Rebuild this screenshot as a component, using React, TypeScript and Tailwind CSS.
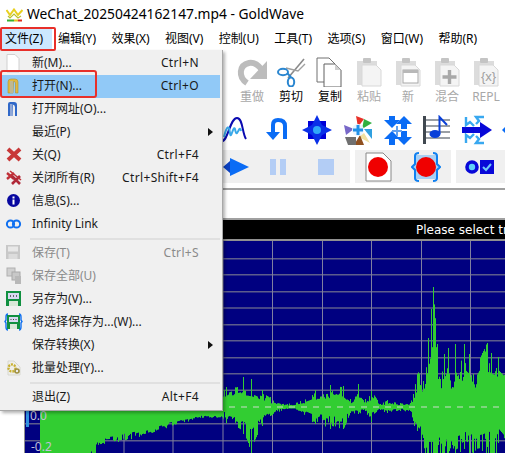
import React from "react";

const FONT = "font-['Noto_Sans','Noto_Sans_CJK_SC',sans-serif]";

const Ico = ({ s = 30, children }: { s?: number; children: React.ReactNode }) => (
  <svg width={s} height={s} viewBox={`0 0 ${s} ${s}`} className="shrink-0">{children}</svg>
);

/* ---------- title / menu glyphs ---------- */
const AppIcon = () => (
  <svg width="17" height="14" viewBox="0 0 17 14" className="shrink-0">
    <path d="M0.5 2 L4 7 L8 1.5 L12 7 L16.5 2" fill="none" stroke="#e8d020" strokeWidth="2" />
    <path d="M2 8 L4 10 L8 6 L12 10 L15 8" fill="none" stroke="#b8c030" strokeWidth="1.2" />
    <rect x="1" y="11.5" width="7" height="2" fill="#38b030" />
    <rect x="8" y="11.5" width="4" height="2" fill="#e8c020" />
    <rect x="12" y="11.5" width="4" height="2" fill="#e03020" />
  </svg>
);

const Floppy = ({ c, inner, top }: { c: string; inner: string; top: string }) => (
  <>
    <rect x="4" y="2" width="14" height="14" fill={c} />
    <rect x="6" y="3.5" width="10" height="5" fill={top} />
    <rect x="6.5" y="11" width="9" height="5" fill={inner} />
  </>
);

const menuIcons: Record<string, React.ReactNode> = {
  new: (<path d="M5 1.5 H13 L17 5.5 V19 H5 Z" fill="#fff" stroke="#d0d0d0" />),
  open: (
    <>
      <path d="M6 17 V6 Q6 3 9 3 H13 Q16 3 16 6 V17 H13.5 V7 Q13 5 11.5 5.5 L11 17 Z" fill="#e0b840" stroke="#b09030" strokeWidth=".6" />
      <rect x="8" y="5" width="3" height="12" fill="#c0b890" />
    </>
  ),
  url: (
    <>
      <path d="M6 17 V5 Q6 3 8 3 H12 Q15 3 15 6 V17 H13 V8 Q12 5 11 6 L10.5 17 Z" fill="#3068c8" />
      <rect x="8" y="5" width="2.5" height="12" fill="#90a8d8" />
    </>
  ),
  close: (<path d="M6 4 L18 15 M18 4 L6 15" stroke="#c83838" strokeWidth="4" />),
  closeAll: (
    <>
      <path d="M5 5 L12 11 M12 5 L5 11" stroke="#c03038" strokeWidth="2.4" />
      <path d="M10 8 L18 16 M18 8 L10 16" stroke="#b02838" strokeWidth="2.6" />
      <path d="M8 3 L19 12" stroke="#c03038" strokeWidth="1.6" />
    </>
  ),
  info: (
    <>
      <circle cx="11.5" cy="9.5" r="6.5" fill="#0808a0" />
      <rect x="10.5" y="8.5" width="2" height="5" fill="#fff" />
      <rect x="10.5" y="5.5" width="2" height="2" fill="#fff" />
    </>
  ),
  link: (
    <>
      <circle cx="8.5" cy="10" r="3.6" fill="none" stroke="#1070f0" strokeWidth="2" />
      <circle cx="14.5" cy="10" r="3.6" fill="none" stroke="#1070f0" strokeWidth="2" />
    </>
  ),
  save: <Floppy c="#c8c8c8" top="#e8e8e8" inner="#dcdcdc" />,
  saveAll: (
    <>
      <rect x="5" y="2" width="8" height="8" fill="#d0d0d0" stroke="#b0b0b0" />
      <rect x="10" y="6" width="8" height="8" fill="#c8c8c8" stroke="#a8a8a8" />
      <rect x="13" y="10" width="6" height="8" fill="#b8b8b8" />
    </>
  ),
  saveAs: (
    <>
      <rect x="4" y="2" width="15" height="15" fill="#109040" />
      <rect x="6" y="4" width="11" height="6" fill="#d8d8f0" />
      <path d="M8 7 h1 M11 7 h1 M14 7 h1" stroke="#404040" strokeWidth="1.4" />
      <rect x="7" y="12" width="9" height="5" fill="#d8e8d8" />
    </>
  ),
  saveSel: (
    <>
      <rect x="5" y="3" width="13" height="14" fill="#109040" />
      <rect x="7" y="5" width="9" height="5" fill="#d8d8f0" />
      <path d="M8.5 7.5 h1 M11 7.5 h1 M13.5 7.5 h1" stroke="#404040" strokeWidth="1.2" />
      <rect x="8" y="12" width="7" height="5" fill="#d8e8d8" />
      <path d="M6 2 Q4 2 4 5 V8 L3 9.5 L4 11 V15 Q4 18 6 18 M17 2 Q19 2 19 5 V8 L20 9.5 L19 11 V15 Q19 18 17 18" fill="none" stroke="#1070f0" strokeWidth="1.4" />
    </>
  ),
  batch: (
    <>
      <path d="M6 3 H12 L18 9 V17 H6 Z" fill="#eeeeea" stroke="#d8d8d0" />
      <circle cx="10" cy="10" r="3.5" fill="none" stroke="#c8b030" strokeWidth="2.4" strokeDasharray="2 1" />
      <circle cx="15" cy="13" r="2" fill="none" stroke="#a09040" strokeWidth="1.6" />
    </>
  ),
};

type Row = { t: string; k?: string; ic?: string; dis?: boolean; sub?: boolean; hi?: boolean } | "sep";
const rows: Row[] = [
  { t: "新(M)...", k: "Ctrl+N", ic: "new" },
  { t: "打开(N)...", k: "Ctrl+O", ic: "open", hi: true },
  { t: "打开网址(O)...", ic: "url" },
  { t: "最近(P)", sub: true },
  { t: "关(Q)", k: "Ctrl+F4", ic: "close" },
  { t: "关闭所有(R)", k: "Ctrl+Shift+F4", ic: "closeAll" },
  { t: "信息(S)...", ic: "info" },
  { t: "Infinity Link", ic: "link" },
  "sep",
  { t: "保存(T)", k: "Ctrl+S", ic: "save", dis: true },
  { t: "保存全部(U)", ic: "saveAll", dis: true },
  { t: "另存为(V)...", ic: "saveAs" },
  { t: "将选择保存为...(W)...", ic: "saveSel" },
  { t: "保存转换(X)", sub: true },
  { t: "批量处理(Y)...", ic: "batch" },
  "sep",
  { t: "退出(Z)", k: "Alt+F4" },
];

const topMenus = ["编辑(Y)", "效果(X)", "视图(V)", "控制(U)", "工具(T)", "选项(S)", "窗口(W)", "帮助(R)"];

/* ---------- toolbar icons ---------- */
const Clip = ({ children }: { children?: React.ReactNode }) => (
  <Ico>
    <rect x="3" y="4" width="20" height="24" fill="#dcdcdc" />
    <rect x="9" y="1" width="8" height="5" rx="1" fill="#c4c4c4" />
    <path d="M8 8 H22 L27 13 V29 H8 Z" fill="#f4f4f4" stroke="#d8d8d8" />
    {children}
  </Ico>
);

const toolbar: { n: string; on?: boolean; i: React.ReactNode }[] = [
  {
    n: "重做",
    i: (
      <Ico>
        <path d="M10 26 C1 20 2 8 12 6 C18 5 22 9 25 13" fill="none" stroke="#bcbcbc" strokeWidth="6" />
        <path d="M30 4 V22 H13 Z" fill="#bcbcbc" />
      </Ico>
    ),
  },
  {
    n: "剪切",
    on: true,
    i: (
      <Ico>
        <path d="M12 21 L28 2" stroke="#8a8a8a" strokeWidth="1.6" />
        <path d="M10 11 L22 14 L29 7" fill="none" stroke="#a0a0a0" strokeWidth="1.4" />
        <ellipse cx="7" cy="15" rx="5" ry="3.2" fill="none" stroke="#2a86d0" strokeWidth="2" />
        <ellipse cx="15" cy="25" rx="3.2" ry="4.6" fill="none" stroke="#2a86d0" strokeWidth="2" />
        <path d="M11 16 L15 20" stroke="#2a86d0" strokeWidth="2" />
      </Ico>
    ),
  },
  {
    n: "复制",
    on: true,
    i: (
      <Ico>
        <path d="M2 1 H14 L20 7 V25 H2 Z" fill="#fff" stroke="#707070" />
        <path d="M9 7 H20 L26 13 V30 H9 Z" fill="#fff" stroke="#606060" />
        <path d="M20 7 L20 13 H26" fill="#d0d0d0" />
      </Ico>
    ),
  },
  { n: "粘贴", i: <Clip /> },
  {
    n: "新",
    i: (
      <Clip>
        <rect x="10" y="13" width="15" height="13" fill="#fff" stroke="#a8a8a8" />
        <rect x="10" y="13" width="15" height="3" fill="#b8b8b8" />
      </Clip>
    ),
  },
  {
    n: "混合",
    i: (
      <Clip>
        <path d="M17.5 13 V27 M10.5 20 H24.5" stroke="#a8a8a8" strokeWidth="3.4" />
      </Clip>
    ),
  },
  {
    n: "REPL",
    i: (
      <Clip>
        <text x="17.5" y="24" textAnchor="middle" fontSize="13" fill="#a0a0a0" fontFamily="Liberation Sans">{"{x}"}</text>
      </Clip>
    ),
  },
];

const B1 = "#0a6cf5";
const row2: React.ReactNode[] = [
  <Ico key="a">
    <path d="M0 26 C6 26 8 3 15 3 C21 3 20 18 24 24" fill="none" stroke="#0a0ab0" strokeWidth="2" />
    <path d="M2 22 C5 10 7 10 8 18 C9 26 11 10 13 14 C15 26 17 8 19 16" fill="none" stroke="#38a8e8" strokeWidth="2" />
  </Ico>,
  <Ico key="b">
    <path d="M11 20 V10 Q11 5 16 5 Q23 5 23 11 V24" fill="none" stroke={B1} strokeWidth="4" />
    <path d="M4 17 H18 L11 25 Z" fill={B1} />
  </Ico>,
  <Ico key="c">
    <rect x="6" y="6" width="18" height="18" fill="#0000d8" />
    <path d="M15 0 L20 10 L30 15 L20 20 L15 30 L10 20 L0 15 L10 10 Z" fill="#0a30e8" />
    <circle cx="15" cy="15" r="4" fill="#30a8f8" />
  </Ico>,
  <Ico key="d">
    <path d="M14 1 L22 4 L16 12 Z" fill="#e83028" />
    <path d="M22 4 L30 8 L20 14 Z" fill="#30b040" />
    <path d="M22 14 L32 14 L30 24 Z" fill="#30a0e0" />
    <path d="M22 18 L28 28 L17 22 Z" fill="#f0e0a0" />
    <path d="M12 30 L18 20 L22 30 Z" fill="#905020" />
    <path d="M3 22 H14 V30 H6 Z" fill="#707070" />
    <path d="M2 10 L12 14 L4 20 Z" fill="#7868c8" />
    <circle cx="16" cy="15" r="6" fill="#e8f4ff" />
    <path d="M16 10 V20 M11 15 H21" stroke="#2090e8" strokeWidth="3" />
  </Ico>,
  <Ico key="e">
    <path d="M7 1 V5 H2 L10 13 L18 5 H13 V1 Z" fill={B1} />
    <path d="M25 1 L17 9 H22 V14 H28 V9 H33 Z" fill={B1} transform="translate(-3 0)" />
    <path d="M10 16 L2 24 H7 V30 H13 V24 H18 Z" fill={B1} />
    <path d="M22 16 V22 H17 L25 30 L33 22 H28 V16 Z" fill={B1} transform="translate(-3 0)" />
    <path d="M15 11 V21 M10 16 H20" stroke="#60a0f0" strokeWidth="2" />
  </Ico>,
  <Ico key="f">
    <path d="M3 5 H28 M3 11 H28 M3 17 H28 M3 23 H28" stroke="#7a8088" strokeWidth="1.6" fill="none" />
    <rect x="1" y="1" width="3" height="28" fill="#404850" />
    <ellipse cx="13" cy="19" rx="5.5" ry="4" fill="#0a40d8" />
    <path d="M17.5 19 V2 L25 10" fill="none" stroke="#0a40d8" strokeWidth="2" />
  </Ico>,
  <Ico key="g">
    <path d="M0 12 H18 V7 L30 15 L18 23 V18 H0 Z" fill="#0808d8" />
    <path d="M4 2 L4 10 L8 7 L12 11 M22 2 H14 L17 6 L14 9 M4 28 V20 L8 23 L12 19 M22 28 H14 L17 24 L14 21" fill="none" stroke="#38a8f0" strokeWidth="2.4" />
  </Ico>,
  <Ico key="h">
    <path d="M0 15 L10 5 V25 Z" fill={B1} />
    <rect x="10" y="11" width="18" height="8" fill={B1} />
  </Ico>,
];

/* ---------- waveform ---------- */
const ctrl: [number, number, number][] = [
  [26, 0, 0], [40, 40, 120], [84, 40, 70], [100, 30, 36], [130, 30, 32], [170, 24, 19], [200, 18, 11], [222, 14, 10],
  [226, 20, 16], [243, 30, 27], [251, 28, 46], [262, 17, 19], [270, 10, 9], [287, 3, 2], [300, 6, 4],
  [315, 17, 17], [330, 22, 22], [343, 21, 22], [350, 8, 6], [358, 23, 7], [365, 8, 4], [371, 16, 15],
  [380, 3, 3], [387, 7, 6], [400, 4, 4], [410, 4, 4], [413, 13, 14], [417, 33, 24], [423, 26, 31],
  [428, 69, 60], [431, 98, 60], [433, 120, 60], [437, 63, 60], [440, 28, 46], [444, 53, 50], [448, 59, 50],
  [452, 20, 38], [455, 63, 48], [460, 35, 45], [464, 63, 42], [469, 53, 48], [473, 33, 46], [482, 54, 44],
  [487, 64, 40], [491, 54, 48], [498, 50, 36], [505, 40, 50],
];

const peaks = new Set(ctrl.filter((c) => c[0] >= 222).map((c) => c[0]));

function envelope(x: number): [number, number] {
  for (let i = 1; i < ctrl.length; i++) {
    if (x <= ctrl[i][0]) {
      const [a, u0, d0] = ctrl[i - 1];
      const [b, u1, d1] = ctrl[i];
      const t = (x - a) / (b - a);
      return [u0 + (u1 - u0) * t, d0 + (d1 - d0) * t];
    }
  }
  return [40, 50];
}

function wavePath(): string {
  let seed = 987;
  const rnd = () => {
    seed = (seed * 1664525 + 1013904223) >>> 0;
    return seed / 4294967296;
  };
  let d = "";
  let upN = 0.5;
  let dnN = 0.5;
  for (let x = 40; x < 505; x += 1) {
    const [u, v] = envelope(x);
    if (rnd() > 0.3) {
      const loud = x >= 412;
      upN = (loud ? 0.5 : 0.38) + 0.3 * rnd() + (rnd() > 0.8 ? 0.35 : 0);
      dnN = x < 222 ? 0.8 + 0.25 * rnd() : (loud ? 0.55 : 0.38) + 0.35 * rnd() + (rnd() > 0.7 ? 0.35 : 0);
    }
    const isPeak = peaks.has(x);
    const up = Math.max(1.5, u * (isPeak ? 1 : upN));
    const dn = x < 86 ? 60 : Math.max(1.5, v * (isPeak ? 1 : dnN));
    d += `M${x + 0.5} ${(406 - up).toFixed(1)}V${(406 + dn).toFixed(1)}`;
  }
  return d;
}

const hLines = [257.7, 273.7, 290.7, 307, 323.7, 339.7, 356.7, 372.7, 389.3, 422.7, 439.7];
const vLines = [75, 124, 173, 223, 272.5, 322.5, 371.5, 421.5, 470.5];

const Waveform = () => (
  <svg width="480" height="213" viewBox="25 240 480 213" className="block">
    <rect x="25" y="240" width="480" height="213" fill="#000080" />
    {hLines.map((y) => (
      <line key={y} x1="25" x2="505" y1={y} y2={y} stroke="#5c5c8c" strokeWidth="1.4" />
    ))}
    {vLines.map((x) => (
      <line key={x} x1={x} x2={x} y1="240" y2="453" stroke="#8080a0" strokeWidth="1" />
    ))}
    <path d={wavePath()} stroke="#32cd32" strokeWidth="1" fill="none" />
    <line x1="25" x2="505" y1="406" y2="406" stroke="#98d898" strokeWidth="1.4" strokeDasharray="6 6" />
    <rect x="26" y="410" width="3" height="16" fill="#3090e0" />
  </svg>
);

export default function App() {
  return (
    <div className={`relative h-[453px] w-[505px] overflow-hidden bg-white text-[12px] text-black ${FONT}`}>
      {/* title */}
      <div className="flex h-[27px] items-center pl-[6px] pt-[2px]">
        <AppIcon />
        <span className="ml-[4px] text-[13.8px] whitespace-nowrap">WeChat_20250424162147.mp4 - GoldWave</span>
      </div>

      {/* menu bar */}
      <div className="flex h-[23px] items-center">
        <div className="ml-[2px] flex h-[21px] w-[50px] items-center bg-[#cce8ff] pl-[3px]">文件(Z)</div>
        <div className="ml-[6px] flex gap-[15.4px] whitespace-nowrap">
          {topMenus.map((m) => (
            <span key={m}>{m}</span>
          ))}
        </div>
      </div>

      {/* toolbar row 1 */}
      <div className="flex h-[55px] overflow-hidden pl-[232.5px] pt-[7px]">
        {toolbar.map((b) => (
          <div key={b.n} className="flex w-[39px] shrink-0 flex-col items-center">
            {b.i}
            <span className={`mt-[2px] leading-[16px] ${b.on ? "text-black" : "text-[#a8a8a8]"}`}>{b.n}</span>
          </div>
        ))}
      </div>

      {/* toolbar row 2 */}
      <div className="flex h-[45px] overflow-hidden pl-[217px] pt-[10px]">
        {row2.map((ic, i) => (
          <div key={i} className="flex w-[40px] shrink-0 justify-center">
            {ic}
          </div>
        ))}
      </div>

      {/* toolbar row 3 */}
      <div className="flex h-[33px] gap-[5px] overflow-hidden">
        <div className="flex w-[350px] items-center bg-[#f0f0f0] pl-[223px]">
          <svg width="26" height="18" viewBox="0 0 26 18" className="shrink-0">
            <path d="M7 0 L26 9 L7 18 Z" fill={B1} />
            <path d="M0 9 L7 3 V15 Z" fill="#0a40c0" />
          </svg>
          <div className="ml-[21px] flex h-[16px] w-[16px] justify-between">
            <div className="h-full w-[6px] bg-[#b3cdf5]" />
            <div className="h-full w-[6px] bg-[#b3cdf5]" />
          </div>
          <div className="ml-[32px] h-[16px] w-[16px] bg-[#b3cdf5]" />
        </div>
        <div className="flex w-[96px] items-center justify-around bg-[#f0f0f0]">
          <svg width="27" height="30" viewBox="0 0 27 30">
            <path d="M1 1 H18 L26 9 V29 H1 Z" fill="#fff" stroke="#888" />
            <circle cx="13" cy="15" r="10" fill="#f00000" />
          </svg>
          <svg width="30" height="30" viewBox="0 0 30 30">
            <rect x="3" y="3" width="24" height="24" fill="#a8d0f4" />
            <circle cx="15" cy="15" r="10" fill="#f00000" />
            <path d="M8 1 Q4 1 4 4 V12 L1 15 L4 18 V26 Q4 29 8 29 M22 1 Q26 1 26 4 V12 L29 15 L26 18 V26 Q26 29 22 29" fill="none" stroke="#1080f0" strokeWidth="2" />
          </svg>
        </div>
        <div className="flex flex-1 items-center bg-[#f0f0f0] pl-[9px]">
          <svg width="30" height="16" viewBox="0 0 30 16">
            <circle cx="7" cy="8" r="5" fill="#60d0f8" stroke="#0808d8" strokeWidth="3.6" />
            <rect x="15" y="1" width="14" height="14" fill="#0808d8" />
            <path d="M18 8 L21 11 L26 5" fill="none" stroke="#70c8f8" strokeWidth="2" />
          </svg>
        </div>
      </div>

      <div className="h-[5px]" />
      <div className="h-[2px] bg-[#a0a0a0]" />
      <div className="h-[28px]" />

      {/* track area */}
      <div className="ml-[24px] border-l border-[#909090]">
        <div className="h-[2px] bg-[#a0a0a0]" />
        <div className="flex h-[19px] items-center overflow-hidden bg-black pl-[391px] font-['DejaVu_Sans',sans-serif] text-[12px] whitespace-nowrap text-white">
          Please select tra
        </div>
        <div className="h-[2px] bg-[#909090]" />
        <div className="relative">
          <Waveform />
          <span className="absolute top-[169px] left-[5px] text-[12px] leading-[12px] text-[#c0c0d8]">0.0</span>
          <span className="absolute top-[200px] left-[6px] text-[12px] leading-[12px] text-[#c0c0d8]">-0.2</span>
        </div>
      </div>

      {/* file menu */}
      <div className="absolute top-[50px] left-0 w-[223px] border-r border-b border-[#a8a8a8] bg-[#f0f0f0] py-[1.5px] shadow-[2px_2px_3px_rgba(0,0,0,0.3)]">
        {rows.map((r, i) =>
          r === "sep" ? (
            <div key={i} className="flex h-[6px] items-center pl-[30px] pr-[2px]">
              <div className="h-[2px] w-full bg-[#e0e0e0]" />
            </div>
          ) : (
            <div
              key={i}
              className={`relative mx-[2px] flex h-[23px] items-center pl-[30px] pr-[21px] whitespace-nowrap ${r.hi ? "bg-[#91c9f7]" : ""} ${r.dis ? "text-[#8a8a8a]" : "text-[#1a1a1a]"}`}
            >
              {r.ic && (
                <svg width="22" height="20" viewBox="0 0 22 20" className="absolute top-[1px] left-0">
                  {menuIcons[r.ic]}
                </svg>
              )}
              <span>{r.t}</span>
              {r.k && <span className="ml-auto tracking-[0.35px]">{r.k}</span>}
              {r.sub && (
                <svg width="5" height="8" viewBox="0 0 5 8" className="absolute top-[7px] right-[7px]">
                  <path d="M0 0 L5 4 L0 8 Z" fill="#111" />
                </svg>
              )}
            </div>
          )
        )}
      </div>

      {/* red annotation boxes */}
      <div className="absolute top-[27px] left-0 h-[24px] w-[56px] rounded-[2px] border-2 border-[#e8302a]" />
      <div className="absolute top-[70px] left-0 h-[28px] w-[97px] rounded-[3px] border-2 border-[#e8302a]" />
    </div>
  );
}
